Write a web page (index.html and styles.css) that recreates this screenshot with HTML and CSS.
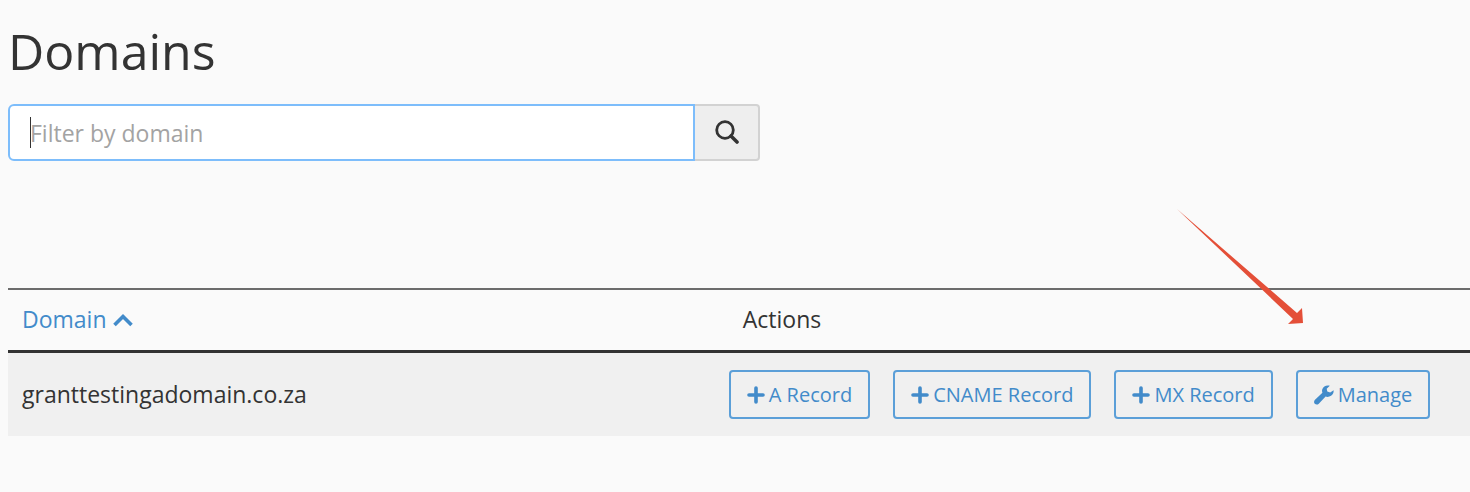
FILE: index.html
```html
<!DOCTYPE html>
<html lang="en">
<head>
    <meta charset="utf-8">
    <meta name="viewport" content="width=device-width, initial-scale=1">
    <link rel="stylesheet" href="styles.css">
    <title>Domains</title>
</head>
<body>
<h1>Domains</h1>
<form class="filter">
    <div class="filter-field">
        <input type="text" id="filter" placeholder="Filter by domain" aria-label="Filter by domain">
        <span class="caret"></span>
    </div>
    <button type="button" class="search" aria-label="Search">
        <svg width="24" height="24" viewBox="0 0 24 24" fill="none" stroke="#333">
            <circle cx="10" cy="10" r="8.300" stroke-width="2.800"/>
            <path d="M16 16l6 6" stroke-width="3.600" stroke-linecap="round"/>
        </svg>
    </button>
</form>
<div class="list">
    <table>
        <thead>
            <tr>
                <th class="name"><a href="#">Domain <svg class="sort" viewBox="0 0 20 14"><path d="M1.500 12L10 3.500l8.500 8.500" fill="none" stroke="currentColor" stroke-width="3.600"/></svg></a></th>
                <th>Actions</th>
            </tr>
        </thead>
        <tbody>
            <tr>
                <td>granttestingadomain.co.za</td>
                <td class="actions">
                    <div class="buttons">
                        <button type="button"><svg class="icon" viewBox="0 0 18 18"><path d="M9 2v14M2 9h14" fill="none" stroke="currentColor" stroke-width="3.600" stroke-linecap="round"/></svg>A Record</button>
                        <button type="button"><svg class="icon" viewBox="0 0 18 18"><path d="M9 2v14M2 9h14" fill="none" stroke="currentColor" stroke-width="3.600" stroke-linecap="round"/></svg>CNAME Record</button>
                        <button type="button"><svg class="icon" viewBox="0 0 18 18"><path d="M9 2v14M2 9h14" fill="none" stroke="currentColor" stroke-width="3.600" stroke-linecap="round"/></svg>MX Record</button>
                        <button type="button"><svg class="icon wrench" viewBox="0 0 20 20"><path d="M19.600 5.200L16.200 7.400 13.300 6.600 12.700 3.800 15.800 0.700C12.500-.3 9.200 1.300 8.300 4.200c-.4 1.300-.3 2.500.1 3.600L1 14.800c-1.200 1.200-1.200 2.900-.2 4s2.900 1.100 4-.1L11.600 11.600c1.200.4 2.500.4 3.700 0 2.900-.8 4.700-3.400 4.300-6.400z" fill="currentColor"/></svg>Manage</button>
                    </div>
                </td>
            </tr>
        </tbody>
    </table>
    <svg class="arrow" width="128" height="116" viewBox="0 0 128 116"><path d="M0 0L120 104L125 99L126 114L111 115L116 110Z" fill="#e44f38"/></svg>
</div>
</body>
</html>
```

FILE: styles.css
```css
* {
    box-sizing: border-box;
}
body {
    margin: 0;
    padding: 17px 0 0 8px;
    background: #fafafa;
    color: #333;
    font-family: "Open Sans", sans-serif;
    font-size: 23px;
    line-height: 32px;
}
h1 {
    margin: 0 0 19px;
    font-size: 50px;
    font-weight: 400;
    line-height: 68px;
}
input, button {
    font-family: inherit;
    color: inherit;
}
.filter {
    display: flex;
    width: 60%;
    max-width: 752px;
    height: 57px;
}
.filter-field {
    position: relative;
    flex: 1;
}
.filter-field input {
    width: 100%;
    height: 100%;
    padding: 0 20px;
    border: 2px solid #7dbdfb;
    border-radius: 6px 0 0 6px;
    background: #fff;
    font-size: 23px;
    outline: none;
}
.filter-field input::placeholder {
    color: #a3a3a3;
    opacity: 1;
}
.caret {
    position: absolute;
    left: 22px;
    top: 13px;
    width: 1px;
    height: 31px;
    background: #333;
}
.search {
    display: flex;
    align-items: center;
    justify-content: center;
    width: 65px;
    padding: 0 0 2px;
    border: 2px solid #d2d2d2;
    border-left: 0;
    border-radius: 0 4px 4px 0;
    background: #eee;
}
.list {
    position: relative;
    margin-top: 127px;
}
table {
    width: 100%;
    border-collapse: separate;
    border-spacing: 0;
    border-top: 2px solid #6c6c6c;
}
th, td {
    padding: 13px 14px 15px;
    font-weight: 400;
    text-align: left;
}
th {
    border-bottom: 3px solid #333;
}
.name {
    width: 49.3%;
}
.name a {
    color: #428bca;
    text-decoration: none;
}
.sort {
    width: 20px;
    height: 14px;
    margin-left: 1px;
    vertical-align: 1px;
}
td {
    background: #f0f0f0;
}
td.actions {
    padding: 17px 0;
}
.buttons {
    display: flex;
    gap: 23px;
}
.buttons button {
    display: flex;
    align-items: center;
    gap: 4px;
    height: 49px;
    padding: 0 16px;
    border: 2px solid #5b9fd8;
    border-radius: 4px;
    background: transparent;
    color: #428bca;
    font-size: 20px;
    white-space: nowrap;
}
.icon {
    width: 18px;
    height: 18px;
}
.icon.wrench {
    width: 20px;
    height: 20px;
}
.arrow {
    position: absolute;
    top: -79px;
    right: 165px;
}
```
